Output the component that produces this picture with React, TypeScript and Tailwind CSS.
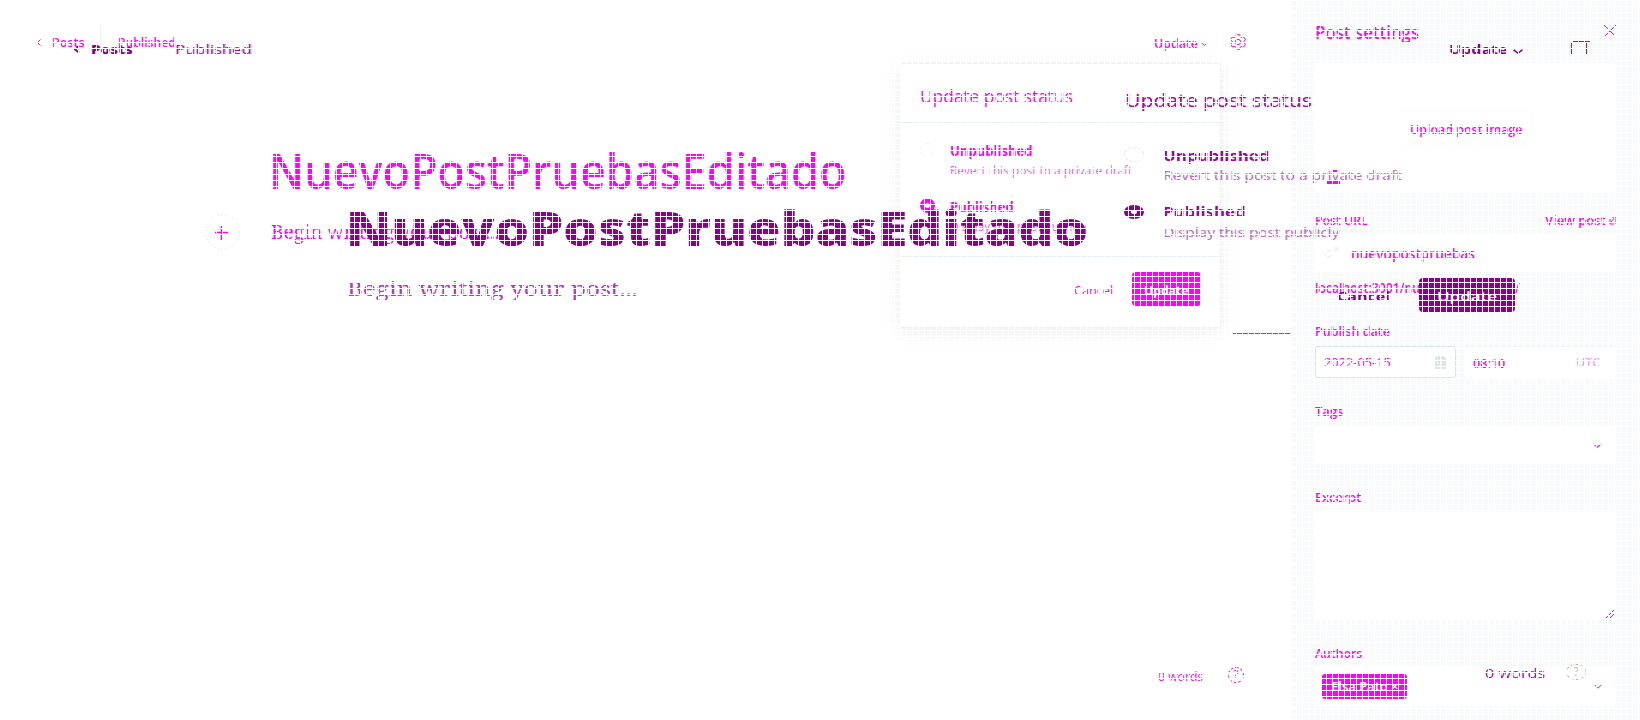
import { useLayoutEffect, useRef, useState } from "react";
import type { ReactNode } from "react";

function Label({ w, className = "", children }: { w: number; className?: string; children: ReactNode }) {
  const ref = useRef<HTMLSpanElement>(null);
  const [scale, setScale] = useState(1);
  useLayoutEffect(() => {
    if (ref.current) setScale(w / ref.current.offsetWidth);
  }, [w]);
  return (
    <span className="block shrink-0" style={{ width: w }}>
      <span ref={ref} className={`inline-block origin-left whitespace-nowrap align-top ${className}`} style={{ transform: `scaleX(${scale})` }}>
        {children}
      </span>
    </span>
  );
}

function Chevron({ className = "" }: { className?: string }) {
  return (
    <svg viewBox="0 0 8 5" preserveAspectRatio="none" className={`shrink-0 fill-none stroke-current ${className}`}>
      <path d="M.5 .8 4 4.2 7.5 .8" />
    </svg>
  );
}

function Option({ label, lw, text, tw, on }: { label: string; lw: number; text: string; tw: number; on?: boolean }) {
  return (
    <div className="flex h-[56px] gap-[15px]">
      <div className={on ? "-mt-px h-[15px] w-[15px] rounded-full border-[5px] border-[#f0f]" : "h-[14px] w-[15px] rounded-full border border-dashed border-[#eee]"} />
      <div>
        <Label w={lw} className="text-[14px] leading-[16px] font-bold">{label}</Label>
        <Label w={tw} className="-mt-[5px] text-[13px] leading-[16px] opacity-70">{text}</Label>
      </div>
    </div>
  );
}

function Dropdown() {
  return (
    <div className="absolute top-[63px] left-[900px] h-[265px] w-[321px] rounded-[3px] border border-[#f1f1f1] bg-white text-[#f0f] shadow-[0_4px_20px_rgba(0,0,0,0.08)]">
      <div className="h-[59px] border-b border-[#e5eff5] pt-[19px] pl-[19px]">
        <Label w={153} className="text-[18px] leading-[26px] font-medium">Update post status</Label>
      </div>
      <div className="h-[134px] border-b border-[#e5eff5] pt-[20px] pl-[19px]">
        <Option label="Unpublished" lw={83} text="Revert this post to a private draft" tw={182} />
        <Option on label="Published" lw={64} text="Display this post publicly" tw={137} />
      </div>
      <div className="flex items-start gap-[19px] pt-[15px] pl-[173px]">
        <Label w={39} className="pt-[9px] text-[13px] leading-[18px] font-medium">Cancel</Label>
        <div className="h-[34px] w-[69px] rounded-[4px] bg-[#f0f] pt-[9px] pl-[12px] text-white">
          <Label w={44} className="text-[13px] leading-[18px] font-bold">Update</Label>
        </div>
      </div>
    </div>
  );
}

function Settings() {
  return (
    <aside className="h-[720px] w-[349px] bg-[#f9fafc] pt-[19px] pl-[24px] text-[13px] leading-[18px] font-semibold">
      <div className="flex h-[44px] w-[301px] justify-between">
        <Label w={104} className="text-[18px] leading-[26px] font-semibold">Post settings</Label>
        <svg viewBox="0 0 12 12" className="mt-[6px] h-3 w-3 stroke-[#f0f]"><path d="M0 0 12 12M12 0 0 12" /></svg>
      </div>
      <div className="h-[129px] w-[301px] rounded-[3px] bg-white pt-[48px]">
        <div className="ml-[83px] h-[35px] w-[135px] rounded-[4px] border border-[#fcfcfc] pt-[8px] pl-[11px]">
          <Label w={112}>Upload post image</Label>
        </div>
        <div className="mt-[24px] ml-[18px] h-[2px] w-[4px] bg-[#f0f]" />
        <div className="mt-[9px] ml-[12px] h-[3px] w-[13px] bg-[#f0f]" />
      </div>
      <div className="mt-[18px] flex w-[301px] justify-between leading-[20px]">
        <Label w={53}>Post URL</Label>
        <div className="flex gap-[3px]">
          <Label w={61}>View post</Label>
          <svg viewBox="0 0 7 9" className="mt-[6px] h-[9px] w-[7px] fill-none stroke-[#f0f]"><path d="M1 3v5h5V4M2 6l4-5M3 1h3v3" /></svg>
        </div>
      </div>
      <div className="mt-[4px] flex h-[38px] w-[301px] items-center gap-[12px] rounded-[3px] bg-white pl-[10px]">
        <svg viewBox="0 0 14 12" className="h-3 w-[14px] fill-none stroke-[#e5e9eb]"><path d="M6 4H3a3 3 0 1 0 3 4M7 7l6-6M9 1h4v4" /></svg>
        <Label w={124} className="pt-px text-[14px]">nuevopostpruebas</Label>
      </div>
      <Label w={205} className="mt-[7px] text-[14px]">localhost:3001/nuevopostpruebas/</Label>
      <Label w={75} className="mt-[25px]">Publish date</Label>
      <div className="mt-[6px] flex h-[32px] w-[301px] justify-between">
        <div className="flex w-[141px] items-center justify-between rounded-[3px] border border-[#d3e2e8] bg-white pr-[9px] pl-[8px]">
          <Label w={67} className="text-[13px] font-medium">2022-05-15</Label>
          <svg viewBox="0 0 11 14" className="h-[14px] w-[11px] fill-none stroke-[#dfe5e5] stroke-2"><path d="M1 3h9v10H1zM1 6h9M1 10h9M4 1v12M8 1v12" /></svg>
        </div>
        <div className="flex w-[151px] items-center justify-between rounded-[3px] border-t border-[#edf3f6] bg-white pr-[16px] pl-[8px]">
          <Label w={32} className="text-[13px]">08:10</Label>
          <Label w={24} className="text-[12px] opacity-40">UTC</Label>
        </div>
      </div>
      <Label w={28} className="mt-[24px]">Tags</Label>
      <div className="mt-[6px] flex h-[38px] w-[301px] items-center justify-end rounded-[3px] bg-white pr-[14px]"><Chevron className="h-[5px] w-[9px]" /></div>
      <Label w={46} className="mt-[24px]">Excerpt</Label>
      <div className="mt-[6px] flex h-[108px] w-[301px] items-end justify-end rounded-[3px] bg-white p-[2px]">
        <svg viewBox="0 0 8 8" className="h-2 w-2 stroke-[#f0f]"><path d="M0 8 8 0M4 8 8 4" /></svg>
      </div>
      <Label w={47} className="mt-[24px]">Authors</Label>
      <div className="mt-[5px] flex h-[39px] w-[301px] items-center justify-between rounded-[3px] bg-white pr-[14px] pl-[7px]">
        <div className="h-[25px] w-[85px] rounded-[3px] bg-[#f0f] pt-[3px] pl-[9px] text-white"><Label w={68}>Elsa Pato ×</Label></div>
        <Chevron className="h-[5px] w-[8px]" />
      </div>
    </aside>
  );
}

function SettingsView() {
  return (
    <div className="flex h-[720px] w-[1640px] text-[#f0f]">
      <main className="flex w-[1291px] flex-col">
        <div className="flex h-[118px] pt-[25px] pl-[37px] text-[13px] leading-[18px] font-semibold">
          <svg viewBox="0 0 4 7" className="mt-[14px] h-[7px] w-1 shrink-0 fill-none stroke-[#f0f]"><path d="M3.5 .5 .5 3.5l3 3" /></svg>
          <Label w={33} className="mt-[8px] ml-[11px]">Posts</Label>
          <div className="ml-[26px] h-[35px] w-px shrink-0 bg-[#e5eff5]" />
          <Label w={58} className="mt-[8px] ml-[17px]">Published</Label>
          <div className="ml-[995px] flex">
            <Label w={44} className="mt-[9px]">Update</Label>
            <Chevron className="mt-[17px] ml-[3px] h-[4px] w-[7px]" />
          </div>
          <svg viewBox="0 0 24 24" className="mt-[9px] ml-[22px] h-4 w-4 shrink-0 fill-none stroke-[#f0f] stroke-[1.5]">
            <path d="m9.5 1-.8 3-2.5 1.4L3 4.7.8 8.6 3 11v2L.8 15.4 3 19.3l3.2-.7L8.700 20l.8 3h5l.8-3 2.500-1.400 3.200.7 2.200-3.900L21 13v-2l2.200-2.400L21 4.700l-3.200.7L15.300 4l-.8-3z" />
            <circle cx="12" cy="12" r="4" />
          </svg>
        </div>
        <div className="h-[554px]">
          <Label w={577} className="mt-[21px] ml-[269px] text-[48px] leading-[64px] font-semibold">NuevoPostPruebasEditado</Label>
          <div className="mt-[11px] flex gap-[30px] pl-[205px]">
            <svg viewBox="0 0 36 38" className="h-[38px] w-9 fill-none">
              <circle cx="17.500" cy="18" r="17" className="stroke-[#ddd]" strokeDasharray="1 2" />
              <path d="M10 18.500h14M16.500 12v14" className="stroke-[#f0f] stroke-[1.5]" />
            </svg>
            <Label w={228} className="pt-[4px] font-['Noto_Serif','DejaVu_Serif','Liberation_Serif',serif] text-[19px] leading-[28px]">Begin writing your post...</Label>
          </div>
          <div className="mt-[81px] ml-[1233px] w-[58px] border-t border-[#f0f]" />
        </div>
        <div className="-mt-[5px] flex gap-[25px] pl-[1158px]">
          <Label w={45} className="text-[13px] leading-[18px] font-medium">0 words</Label>
          <div className="h-4 w-4 rounded-full border border-dashed border-[#f0f] text-center text-[12px] leading-[14px]">?</div>
        </div>
      </main>
      <Settings />
    </div>
  );
}

function WideOption({ label, lw, text, tw, on }: { label: string; lw: number; text: string; tw: number; on?: boolean }) {
  return (
    <div className="flex h-[56px] gap-[19px]">
      <div className={on ? "mt-[2px] h-[14px] w-[20px] rounded-[50%] border-x-[7px] border-y-[5px] border-[#8b008b]" : "h-[15px] w-[20px] rounded-[50%] border border-dashed border-[#ddd]"} />
      <div>
        <Label w={lw} className="text-[14px] leading-[18px] font-bold text-[#a000a4]">{label}</Label>
        <Label w={tw} className={on ? "-mt-[4px] text-[13px] leading-[18px] text-[#b040b8] opacity-80 [text-shadow:1px_0_#ddd]" : "-mt-[5px] text-[13px] leading-[18px] text-[#b040b8] opacity-80 [text-shadow:1px_0_#ddd]"}>{text}</Label>
      </div>
    </div>
  );
}

function WideView() {
  return (
    <div className="absolute inset-0 flex text-[#8b008b]">
      <div className="w-[1124px]">
        <div className="flex h-[197px] pt-[40px] pl-[74px] text-[13px] leading-[18px]">
          <svg viewBox="0 0 6 7" className="mt-[6px] h-[7px] w-[6px] fill-none stroke-[#8b008b] stroke-2"><path d="M5 .5 1 3.500l4 3" /></svg>
          <Label w={42} className="ml-[11px] font-extrabold">Posts</Label>
          <Label w={77} className="ml-[53px] font-medium text-[#c000c8] [text-shadow:1px_0_#ccc]">Published</Label>
        </div>
        <Label w={742} className="-mt-px ml-[346px] text-[48px] leading-[64px] font-extrabold">NuevoPostPruebasEditado</Label>
        <Label w={290} className="mt-[15px] ml-[347px] font-['Noto_Serif','DejaVu_Serif','Liberation_Serif',serif] text-[19px] leading-[28px] text-[#c030c8]">Begin writing your post...</Label>
      </div>
      <div className="w-[516px]">
        <div className="flex h-[87px] pt-[40px] pl-[325px]">
          <Label w={58} className="text-[13px] leading-[18px] font-bold">Update</Label>
          <Chevron className="mt-[9px] ml-[6px] h-[5px] w-[10px] stroke-[1.5]" />
          <svg viewBox="0 0 20 14" className="mt-px ml-[48px] h-[14px] w-5 fill-none stroke-[#b000b8]"><path d="M.5 14V1.500M2 .5h17M19.500 14V1.500M15.500 1v13M13.500 1v13" /></svg>
        </div>
        <Label w={187} className="ml-[1px] text-[18px] leading-[26px] font-medium text-[#a800b0] [text-shadow:1px_0_#ddd]">Update post status</Label>
        <div className="mt-[34px]">
          <WideOption label="Unpublished" lw={107} text="Revert this post to a private draft" tw={238} />
          <WideOption on label="Published" lw={83} text="Display this post publicly" tw={176} />
        </div>
        <div className="mt-[19px] flex h-[34px] pl-[213px]">
          <Label w={53} className="pt-[9px] text-[13px] leading-[18px] font-bold">Cancel</Label>
          <div className="ml-[29px] h-[34px] w-[96px] rounded-[4px] bg-[#8b008b] pt-[9px] pl-[18px] text-white"><Label w={60} className="text-[13px] leading-[18px] font-semibold">Update</Label></div>
        </div>
        <div className="mt-[352px] flex pl-[361px]">
          <Label w={60} className="text-[13px] leading-[18px] font-medium text-[#b000b8]">0 words</Label>
          <div className="ml-[21px] h-4 w-[20px] rounded-[50%] border border-dashed border-[#b8a0b8] text-center text-[12px] leading-[14px] text-[#bbb]">?</div>
        </div>
      </div>
    </div>
  );
}

export default function App() {
  return (
    <div className="relative h-[720px] w-[1640px] overflow-hidden bg-white font-['Open_Sans','Noto_Sans',sans-serif]">
      <SettingsView />
      <Dropdown />
      <WideView />
      <div className="pointer-events-none absolute inset-0 bg-[linear-gradient(to_right,white_1px,transparent_1px),linear-gradient(to_bottom,white_1px,transparent_1px)] bg-[size:6px_6px]" />
    </div>
  );
}
